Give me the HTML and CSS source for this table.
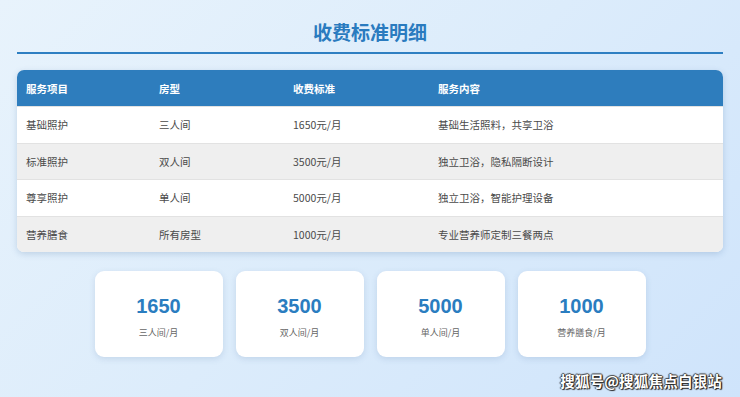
FILE: index.html
```html
<!DOCTYPE html>
<html lang="zh">
<head>
<meta charset="utf-8">
<link rel="stylesheet" href="styles.css">
</head>
<body>
<div class="page">
  <h1 class="title">收费标准明细</h1>
  <div class="rule"></div>
  <div class="table">
    <div class="row head">
      <div>服务项目</div><div>房型</div><div>收费标准</div><div>服务内容</div>
    </div>
    <div class="row">
      <div>基础照护</div><div>三人间</div><div>1650元/月</div><div>基础生活照料，共享卫浴</div>
    </div>
    <div class="row alt">
      <div>标准照护</div><div>双人间</div><div>3500元/月</div><div>独立卫浴，隐私隔断设计</div>
    </div>
    <div class="row">
      <div>尊享照护</div><div>单人间</div><div>5000元/月</div><div>独立卫浴，智能护理设备</div>
    </div>
    <div class="row alt">
      <div>营养膳食</div><div>所有房型</div><div>1000元/月</div><div>专业营养师定制三餐两点</div>
    </div>
  </div>
  <div class="cards">
    <div class="card"><div class="num">1650</div><div class="lbl">三人间/月</div></div>
    <div class="card"><div class="num">3500</div><div class="lbl">双人间/月</div></div>
    <div class="card"><div class="num">5000</div><div class="lbl">单人间/月</div></div>
    <div class="card"><div class="num">1000</div><div class="lbl">营养膳食/月</div></div>
  </div>
  <div class="watermark">搜狐号@搜狐焦点白银站</div>
</div>
</body>
</html>
```
FILE: styles.css
```css
html, body {
  margin: 0;
  padding: 0;
}
body {
  width: 740px;
  height: 397px;
  overflow: hidden;
  font-family: "Noto Sans CJK SC", "Liberation Sans", sans-serif;
  background: linear-gradient(135deg, #e8f3fc 0%, #dcecfb 50%, #cfe4fb 100%);
}
.page {
  position: relative;
  height: 397px;
  box-sizing: border-box;
  padding: 18px 17px 0 17px;
}
.title {
  margin: 0;
  text-align: center;
  font-size: 19px;
  line-height: 28px;
  font-weight: 700;
  color: #2a7bbf;
}
.rule {
  margin-top: 6px;
  height: 2px;
  background: #2e7fc2;
}
.table {
  margin-top: 16px;
  border-radius: 7px;
  overflow: hidden;
  background: #fff;
  box-shadow: 0 2px 6px rgba(60, 100, 150, 0.22);
}
.row {
  display: grid;
  grid-template-columns: 133px 134px 145px 1fr;
  height: 36.5px;
  align-items: center;
  padding-left: 9px;
  font-size: 10.5px;
  color: #4a4a4a;
  border-top: 1px solid #e2e2e2;
  box-sizing: border-box;
}
.row.head {
  height: 36px;
  background: #2e7dbd;
  color: #fff;
  font-weight: 700;
  font-size: 10.5px;
  border-top: none;
}
.row.alt {
  background: #efefef;
}
.cards {
  display: flex;
  justify-content: center;
  gap: 13px;
  margin-top: 19px;
}
.card {
  width: 128px;
  height: 86px;
  background: #fff;
  border-radius: 9px;
  box-shadow: 0 2px 6px rgba(60, 100, 150, 0.16);
  display: flex;
  flex-direction: column;
  align-items: center;
}
.num {
  margin-top: 23px;
  font-family: "Liberation Sans", Arial, sans-serif;
  font-size: 20px;
  font-weight: 700;
  color: #2a7dc0;
  line-height: 24px;
}
.lbl {
  margin-top: 8px;
  font-size: 9px;
  color: #666;
}
.watermark {
  position: absolute;
  right: 18px;
  bottom: 6px;
  font-size: 14.5px;
  font-weight: 700;
  color: #fff;
  letter-spacing: 0.2px;
  text-shadow: 1px 1px 1px #222, -1px 0 1px #444, 0 -1px 1px #444, 1px 0 1px #222;
}
```
